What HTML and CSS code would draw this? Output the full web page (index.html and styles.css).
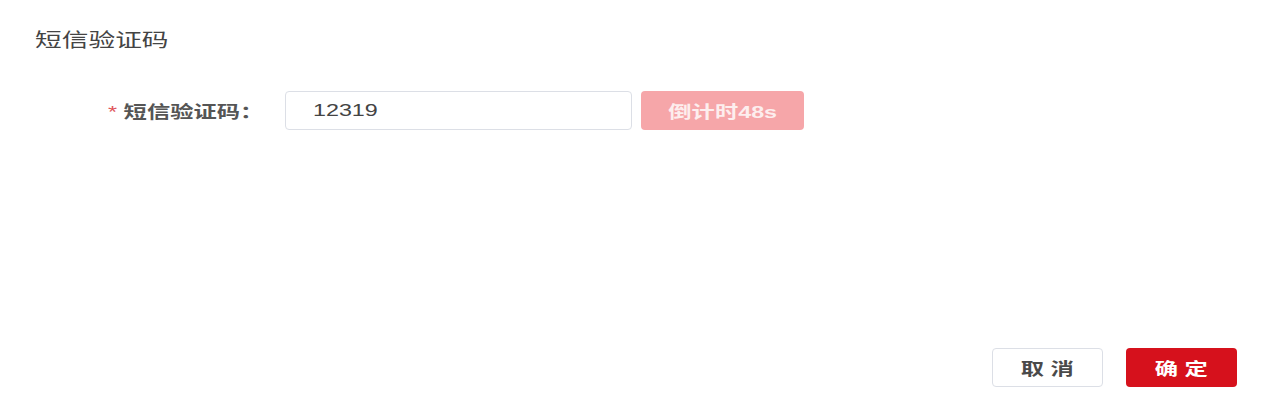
FILE: index.html
```html
<!DOCTYPE html>
<html lang="zh">
<head>
<meta charset="utf-8">
<link rel="stylesheet" href="styles.css">
</head>
<body>
<div class="dialog">
  <div class="title"><span class="sx">短信验证码</span></div>
  <div class="form-row">
    <div class="label"><span class="sx-r"><span class="star">*</span> 短信验证码：</span></div>
    <div class="input"><span class="sx">12319</span></div>
    <div class="countdown"><span class="sx-c">倒计时48s</span></div>
  </div>
  <div class="footer">
    <div class="btn btn-cancel"><span class="sx-c">取 消</span></div>
    <div class="btn btn-ok"><span class="sx-c">确 定</span></div>
  </div>
</div>
</body>
</html>
```

FILE: styles.css
```css
html, body {
  margin: 0;
  padding: 0;
  background: #fff;
}
body {
  font-family: "Liberation Sans", Arial, "Noto Sans CJK SC", sans-serif;
  color: #333;
}
.dialog {
  width: 1284px;
  height: 413px;
  box-sizing: border-box;
  display: flex;
  flex-direction: column;
}
.sx, .sx-r, .sx-c {
  display: inline-block;
  transform: scaleX(1.37);
  white-space: pre;
}
.sx { transform-origin: left center; }
.sx-r { transform-origin: right center; }
.sx-c { transform-origin: center center; }

.title {
  margin: 28px 0 0 35px;
  font-size: 19.5px;
  line-height: 24px;
  color: #444;
}
.form-row {
  margin-top: 39px;
  display: flex;
  align-items: center;
  height: 39px;
}
.label {
  flex: 0 0 285px;
  box-sizing: border-box;
  padding-right: 22px;
  text-align: right;
  font-size: 17px;
  font-weight: bold;
  color: #555;
}
.star {
  color: #e0555a;
  font-weight: normal;
}
.input {
  width: 347px;
  height: 39px;
  box-sizing: border-box;
  border: 1px solid #dcdfe6;
  border-radius: 4px;
  padding-left: 27px;
  display: flex;
  align-items: center;
  font-size: 17px;
  color: #444;
}
.countdown {
  margin-left: 9px;
  width: 163px;
  height: 39px;
  border-radius: 4px;
  background: #f6a6a9;
  color: #fdeeee;
  font-size: 17px;
  font-weight: bold;
  display: flex;
  align-items: center;
  justify-content: center;
}
.footer {
  margin-top: auto;
  margin-bottom: 26px;
  display: flex;
  justify-content: flex-end;
  gap: 23px;
  padding-right: 47px;
}
.btn {
  width: 111px;
  height: 39px;
  box-sizing: border-box;
  border-radius: 4px;
  display: flex;
  align-items: center;
  justify-content: center;
  font-size: 17px;
  font-weight: bold;
}
.btn-cancel {
  border: 1px solid #dcdfe6;
  color: #4a4a4a;
  background: #fff;
}
.btn-ok {
  background: #d6111c;
  color: #fff;
}
```
